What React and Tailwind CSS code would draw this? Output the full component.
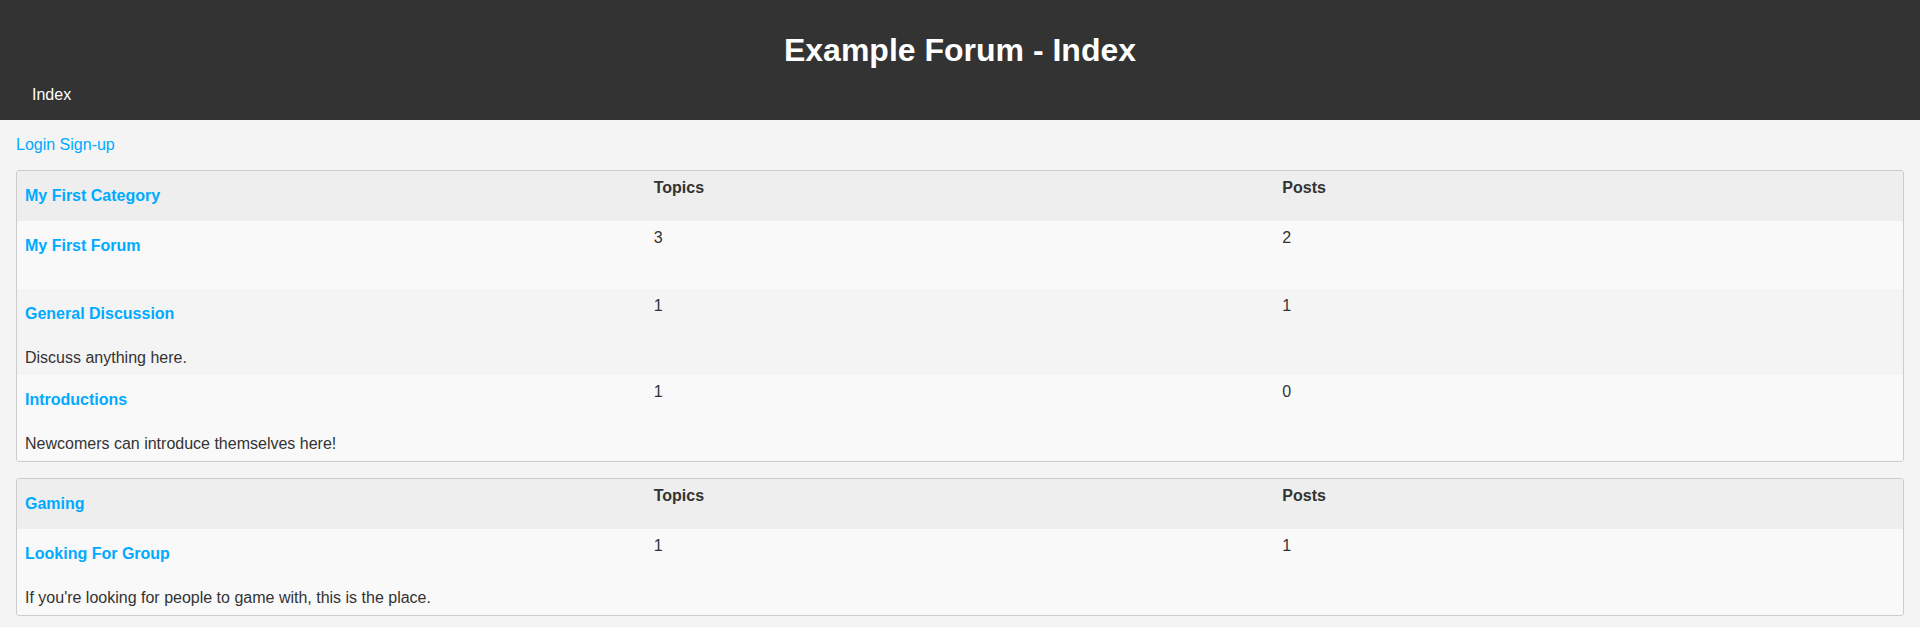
const categories = [
    {
        name: "My First Category",
        forums: [
            { name: "My First Forum", desc: "", topics: 3, posts: 2 },
            { name: "General Discussion", desc: "Discuss anything here.", topics: 1, posts: 1 },
            { name: "Introductions", desc: "Newcomers can introduce themselves here!", topics: 1, posts: 0 },
        ],
    },
    {
        name: "Gaming",
        forums: [
            { name: "Looking For Group", desc: "If you're looking for people to game with, this is the place.", topics: 1, posts: 1 },
        ],
    },
];

const Category = ({ cat }) => (
    <div className="mb-4 rounded-[3px] border border-[#ccc] overflow-hidden">
        <div className="grid grid-cols-3 bg-[#eee]">
            <div className="p-2">
                <a href="#" className="block my-2 font-bold text-[#00aaff]">{cat.name}</a>
            </div>
            <div className="p-2 font-bold">Topics</div>
            <div className="p-2 font-bold">Posts</div>
        </div>
        {cat.forums.map((f, i) => (
            <div key={f.name} className={"grid grid-cols-3 " + (i % 2 === 0 ? "bg-[#f9f9f9]" : "bg-[#f4f4f4]")}>
                <div className="p-2">
                    <a href="#" className="block my-2 font-bold text-[#00aaff]">{f.name}</a>
                    <p className="mt-[26px]">{f.desc}</p>
                </div>
                <div className="p-2">{f.topics}</div>
                <div className="p-2">{f.posts}</div>
            </div>
        ))}
    </div>
);

export default function App() {
    return (
        <div className="min-h-screen bg-[#f4f4f4] text-[#333] text-[16px] leading-[18px] font-['Liberation_Sans',Arial,sans-serif]">
            <header className="bg-[#333] text-white h-[120px] px-4 pt-8">
                <h1 className="text-center text-[32px] font-bold leading-[37px]">Example Forum - Index</h1>
                <nav className="mt-[17px] pl-4">
                    <a href="#" className="text-white">Index</a>
                </nav>
            </header>
            <main className="p-4">
                <div className="text-[#00aaff]">
                    <a href="#">Login</a> <a href="#">Sign-up</a>
                </div>
                <div className="mt-4">
                    {categories.map(cat => <Category key={cat.name} cat={cat} />)}
                </div>
            </main>
        </div>
    );
}
